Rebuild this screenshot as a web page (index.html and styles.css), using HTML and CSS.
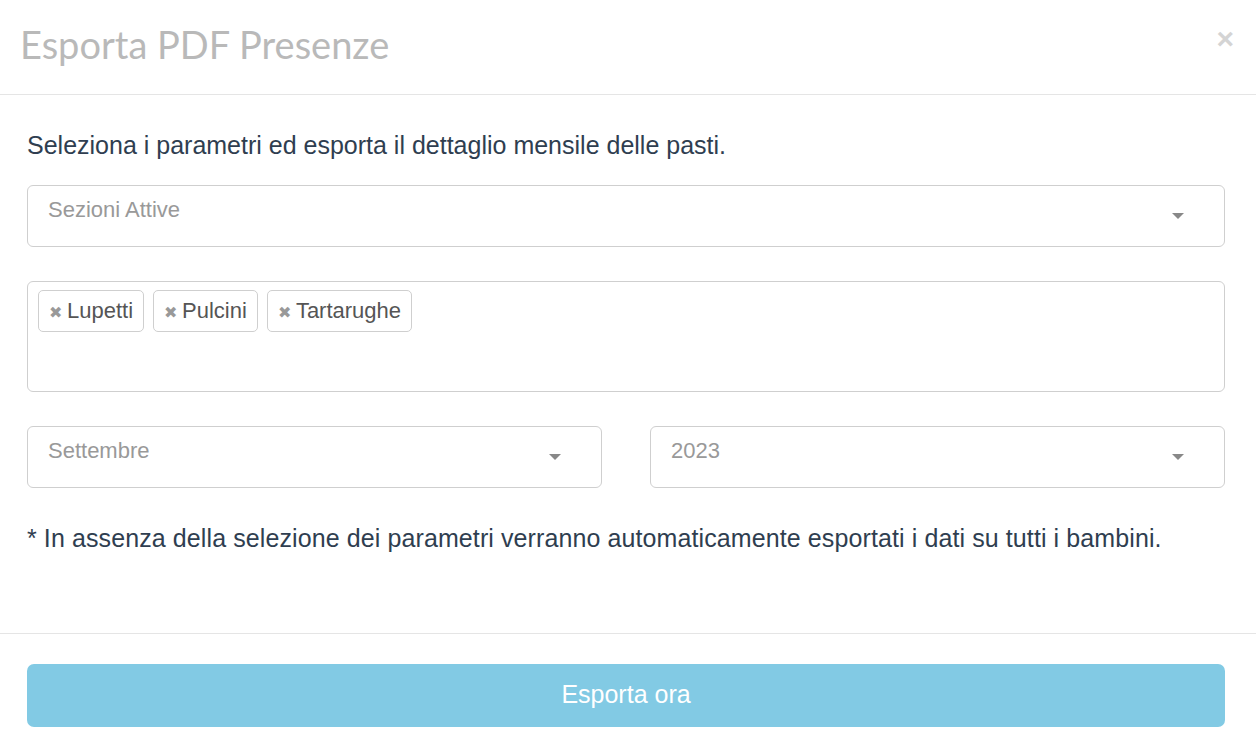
FILE: index.html
```html
<!DOCTYPE html>
<html>
<head>
<meta charset="utf-8">
<link rel="stylesheet" href="styles.css">
</head>
<body>
<div class="modal">
  <div class="modal-header">
    <h1 class="title">Esporta PDF Presenze</h1>
    <span class="close">&times;</span>
  </div>
  <div class="modal-body">
    <p class="intro">Seleziona i parametri ed esporta il dettaglio mensile delle pasti.</p>
    <div class="select">
      <span class="placeholder">Sezioni Attive</span>
      <span class="caret"></span>
    </div>
    <div class="tagbox">
      <span class="tag"><span class="tag-x">&#x2716;</span>Lupetti</span>
      <span class="tag"><span class="tag-x">&#x2716;</span>Pulcini</span>
      <span class="tag"><span class="tag-x">&#x2716;</span>Tartarughe</span>
    </div>
    <div class="row">
      <div class="select">
        <span class="placeholder">Settembre</span>
        <span class="caret"></span>
      </div>
      <div class="select">
        <span class="placeholder">2023</span>
        <span class="caret"></span>
      </div>
    </div>
    <p class="note">* In assenza della selezione dei parametri verranno automaticamente esportati i dati su tutti i bambini.</p>
  </div>
  <div class="modal-footer">
    <button class="btn">Esporta ora</button>
  </div>
</div>
</body>
</html>
```
FILE: styles.css
```css
html, body {
  margin: 0;
  padding: 0;
  background: #fff;
}
body {
  font-family: "Liberation Sans", Arial, sans-serif;
  color: #2f3e50;
}
.modal {
  width: 1256px;
  height: 742px;
  display: flex;
  flex-direction: column;
}
.modal-header {
  height: 95px;
  box-sizing: border-box;
  border-bottom: 1px solid #e5e5e5;
  display: flex;
  justify-content: space-between;
  align-items: flex-start;
  padding: 0 22px 0 20px;
}
.title {
  margin: 0;
  margin-top: 20px;
  font-family: Lato, sans-serif;
  font-weight: 400;
  font-size: 38px;
  line-height: 48px;
  color: #b9b9b9;
}
.close {
  margin-top: 23px;
  font-family: "Liberation Sans", Arial, sans-serif;
  font-size: 30px;
  font-weight: bold;
  color: #d4d4d4;
  line-height: 32px;
}
.modal-body {
  padding: 0 31px 0 27px;
  height: 539px;
  box-sizing: border-box;
  border-bottom: 1px solid #e5e5e5;
}
.intro {
  margin: 34px 0 0;
  font-size: 25px;
  line-height: 32px;
}
.select {
  margin-top: 24px;
  height: 62px;
  box-sizing: border-box;
  border: 1px solid #cfcfcf;
  border-radius: 6px;
  display: flex;
  justify-content: space-between;
  align-items: flex-start;
  padding: 10px 40px 0 20px;
}
.placeholder {
  font-size: 22px;
  line-height: 28px;
  color: #999;
}
.caret {
  margin-top: 17px;
  width: 0;
  height: 0;
  border-left: 6px solid transparent;
  border-right: 6px solid transparent;
  border-top: 6px solid #888;
}
.tagbox {
  margin-top: 34px;
  height: 111px;
  box-sizing: border-box;
  border: 1px solid #cfcfcf;
  border-radius: 6px;
  padding: 8px 10px;
  display: flex;
  gap: 9px;
  align-items: flex-start;
}
.tag {
  height: 42px;
  box-sizing: border-box;
  border: 1px solid #cfcfcf;
  border-radius: 5px;
  padding: 0 10px 0 10px;
  display: flex;
  align-items: center;
  font-size: 22px;
  color: #555;
}
.tag-x {
  font-size: 16px;
  color: #999;
  margin-right: 5px;
  margin-top: 2px;
}
.row {
  margin-top: 34px;
  display: grid;
  grid-template-columns: 1fr 1fr;
  gap: 48px;
}
.row .select {
  margin-top: 0;
}
.note {
  margin: 34px 0 0;
  font-size: 25px;
  letter-spacing: 0.1px;
  line-height: 32px;
}
.modal-footer {
  padding: 30px 31px 0 27px;
}
.btn {
  width: 100%;
  height: 63px;
  border: none;
  border-radius: 7px;
  background: #82cae4;
  color: #fff;
  font-family: "Liberation Sans", Arial, sans-serif;
  font-size: 25px;
  display: block;
  padding-bottom: 3px;
}
```
